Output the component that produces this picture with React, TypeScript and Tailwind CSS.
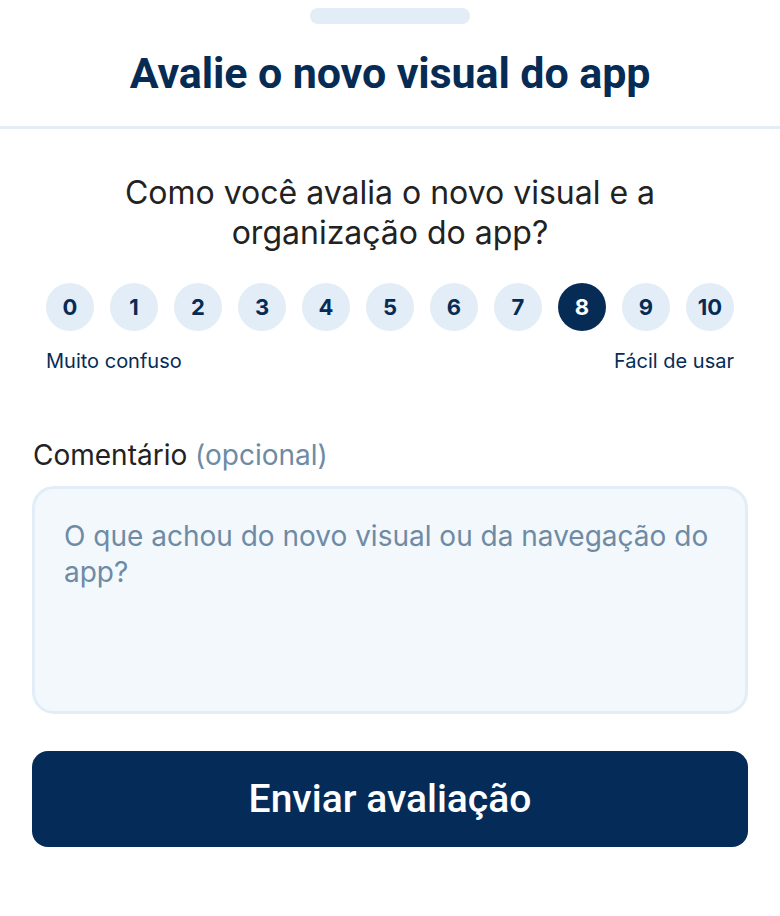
import { useState } from 'react'

const scores = [0, 1, 2, 3, 4, 5, 6, 7, 8, 9, 10]

export default function App() {
  const [selected, setSelected] = useState(8)
  const [comment, setComment] = useState('')

  return (
    <div className="min-h-[916px] w-full bg-white font-['Inter',sans-serif]">
      {/* Handle */}
      <div className="flex justify-center pt-2">
        <div className="h-4 w-40 rounded-full bg-[#e3edf7]" />
      </div>

      {/* Header */}
      <div className="flex h-[105px] items-center justify-center border-b-[3px] border-[#e3edf7]">
        <h1 className="-mt-[3px] font-['Roboto',sans-serif] text-[43px] font-bold tracking-[-0.1px] text-[#062c56]">
          Avalie o novo visual do app
        </h1>
      </div>

      <div className="px-8">
        <p className="mx-auto mt-[44px] max-w-[600px] text-center text-[32px] leading-[40px] text-[#222]">
          Como você avalia o novo visual e a organização do app?
        </p>

        {/* Scale */}
        <div className="mx-auto mt-[30px] w-[688px]">
          <div className="flex gap-4">
            {scores.map((n) => (
              <button
                key={n}
                onClick={() => setSelected(n)}
                className={`flex h-12 w-12 items-center justify-center rounded-full text-[22px] font-bold ${
                  n === selected ? 'bg-[#062c56] text-white' : 'bg-[#e3edf7] text-[#062c56]'
                }`}
              >
                {n}
              </button>
            ))}
          </div>
          <div className="mt-[15px] flex justify-between text-[20px] leading-[30px] text-[#062c56]">
            <span>Muito confuso</span>
            <span>Fácil de usar</span>
          </div>
        </div>

        {/* Comment */}
        <label className="mt-[58px] block pl-px text-[28px] leading-[42px] text-[#222]">
          Comentário <span className="text-[#6e8ba5]">(opcional)</span>
        </label>
        <textarea
          value={comment}
          onChange={(e) => setComment(e.target.value)}
          placeholder="O que achou do novo visual ou da navegação do app?"
          className="mt-[10px] block h-[228px] w-full resize-none rounded-[22px] border-[3px] border-[#e3edf7] bg-[#f3f8fd] px-[29px] py-[29px] text-[28px] leading-[36px] text-[#222] outline-none placeholder:text-[#6e8ba5]"
        />

        <button className="mt-[37px] flex h-24 w-full items-center justify-center rounded-2xl bg-[#052c58] font-['Roboto',sans-serif] text-[39px] font-medium text-white">
          Enviar avaliação
        </button>
      </div>
    </div>
  )
}
